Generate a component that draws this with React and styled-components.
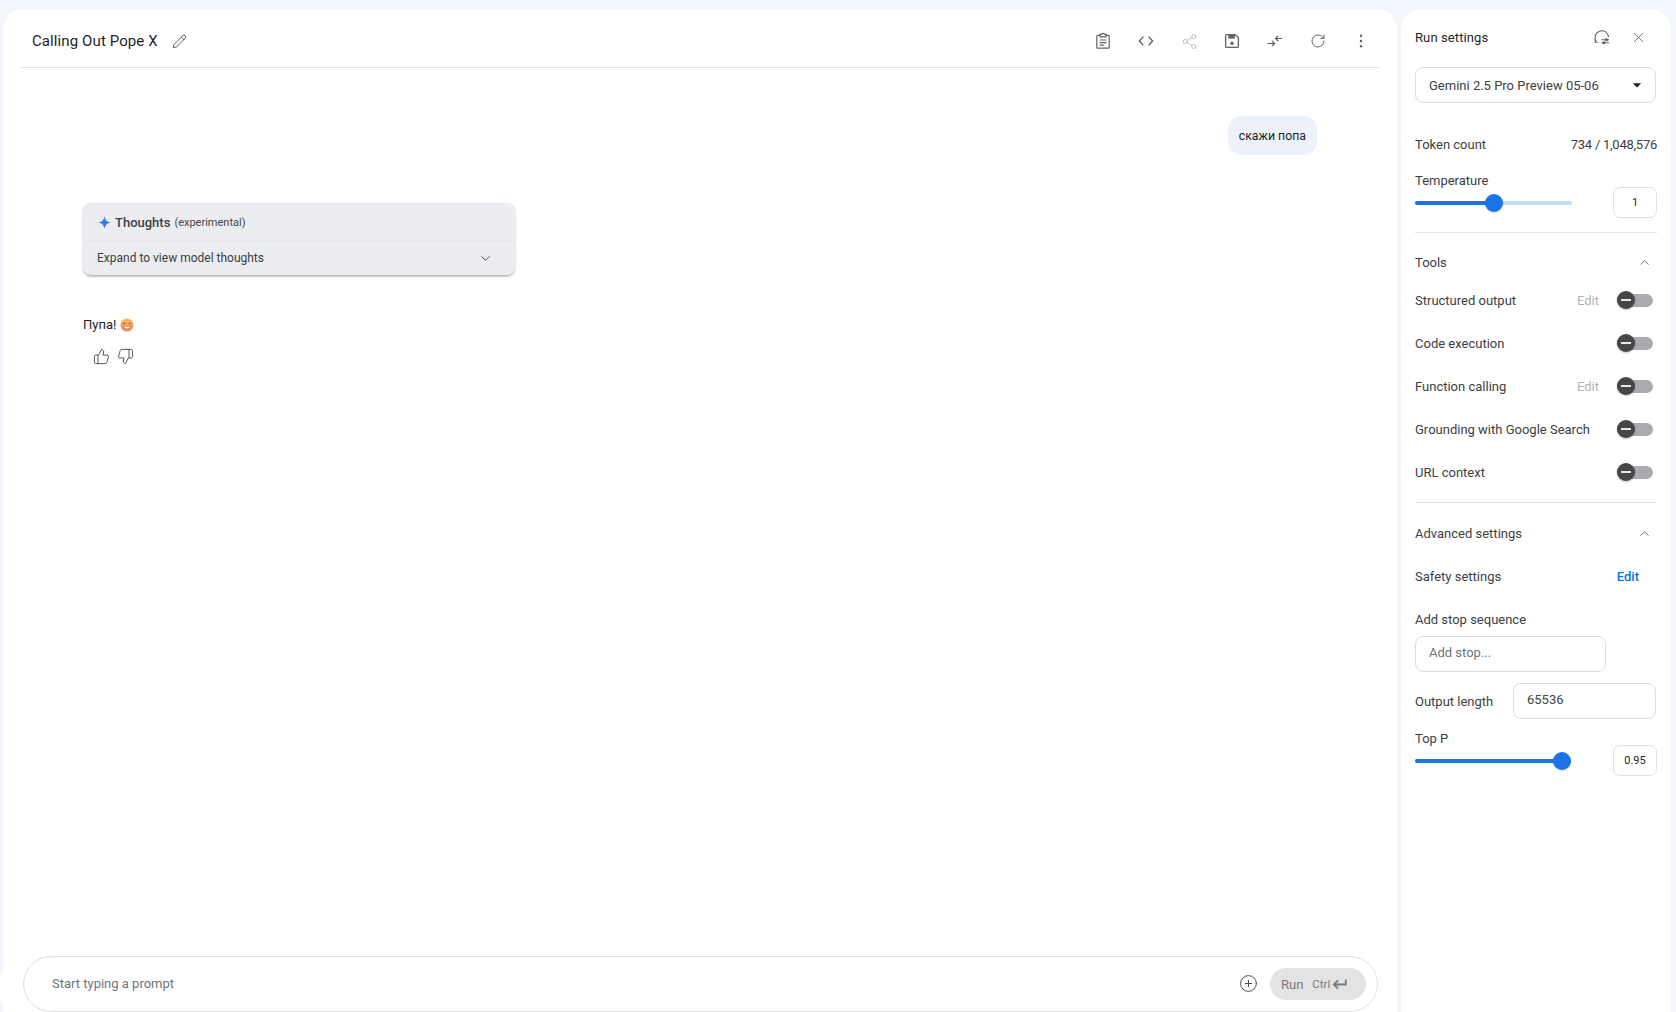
import React from 'react';
import styled, { createGlobalStyle } from 'styled-components';
import { MdArrowDropDown } from 'react-icons/md';
import {
  Pencil, Share2, RotateCw, ChevronDown, ChevronUp, X,
  ThumbsUp, ThumbsDown, CirclePlus,
} from 'lucide-react';

const GlobalStyle = createGlobalStyle`
  html, body { margin: 0; padding: 0; background: #f3f6fc; }
  body { font-family: Roboto, "Liberation Sans", sans-serif; color: #1f1f1f; font-size: 13px; }
  * { box-sizing: border-box; }
`;

const Page = styled.div`
  position: relative;
  display: flex;
  gap: 4px;
  height: 1012px;
  padding: 9px 5px 0 3px;
  overflow: hidden;
  background: #f3f6fc;
  &::before {
    content: '';
    position: absolute;
    left: 0;
    top: 973px;
    width: 3px;
    height: 30px;
    background: #fff;
  }
`;

const Main = styled.main`
  width: 1394px;
  display: flex;
  flex-direction: column;
  background: #fff;
  border-radius: 20px 20px 0 0;
`;

const Header = styled.header`
  height: 59px;
  margin: 0 18px 0 18px;
  padding: 6px 6px 0 11px;
  display: flex;
  align-items: center;
  border-bottom: 1px solid #e1e3e5;
`;

const Title = styled.h1`
  margin: 0 13px 0 0;
  font-size: 15px;
  font-weight: 400;
  letter-spacing: 0.1px;
  color: #1f1f1f;
`;

const Toolbar = styled.div`
  margin-left: auto;
  display: flex;
  gap: 19px;
`;

const IconSlot = styled.span`
  width: ${p => p.$size || 24}px;
  height: ${p => p.$size || 24}px;
  margin-right: ${p => p.$right || 0}px;
  display: inline-flex;
  align-items: center;
  justify-content: center;
  flex: none;
  color: ${p => p.$color || '#5f6368'};
`;

const Chat = styled.section`
  flex: 1;
  display: flex;
  flex-direction: column;
  padding: 48px 80px 0 80px;
`;

const UserBubble = styled.div`
  align-self: flex-end;
  height: 39px;
  padding: 0 11px;
  display: flex;
  align-items: center;
  border-radius: 14px;
  background: #edf2fa;
  font-size: 12.3px;
  color: #1f1f1f;
`;

const ThoughtsCard = styled.div`
  width: 432px;
  margin-top: 48px;
  border-radius: 8px;
  background: #ecedf1;
  box-shadow: 0 2px 3px -1px rgba(60, 64, 67, 0.55), 0 0 2px rgba(60, 64, 67, 0.08);
`;

const ThoughtsHead = styled.div`
  height: 38px;
  padding: 2px 15px 0 15px;
  display: flex;
  align-items: center;
  gap: 4px;
  border-bottom: 1px solid #e6e7ea;
  font-size: 13px;
  font-weight: 500;
  color: #3c4043;
`;

const Muted = styled.span`
  font-size: 11px;
  font-weight: 400;
  color: #444746;
`;

const ThoughtsRow = styled.div`
  height: 34px;
  padding: 0 22px 0 14px;
  display: flex;
  align-items: center;
  justify-content: space-between;
  font-size: 12px;
  color: #3c4043;
`;

const Answer = styled.p`
  margin: 40px 0 0;
  line-height: 20px;
  display: flex;
  align-items: center;
  gap: 4px;
  font-size: 13px;
  color: #1f1f1f;
`;

const Feedback = styled.div`
  margin: 12px 0 0 9px;
  display: flex;
  gap: 6px;
`;

const PromptBox = styled.div`
  height: 56px;
  margin: 0 19px 0 20px;
  padding: 0 11px 2px 28px;
  display: flex;
  align-items: center;
  border: 1px solid #e0e1e3;
  border-radius: 28px;
  background: #fff;
`;

const Placeholder = styled.span`
  flex: 1;
  font-size: 13px;
  color: #6f7377;
`;

const RunButton = styled.div`
  width: 96px;
  height: 32px;
  margin: 2px 0 0 12px;
  padding: 0 0 0 11px;
  display: flex;
  align-items: center;
  border-radius: 16px;
  background: #e3e3e5;
  color: #77797c;
  font-size: 13px;
`;

const RunHint = styled.span`
  margin: 0 2px 0 9px;
  font-size: 11.5px;
`;

const Sidebar = styled.aside`
  width: 270px;
  padding: 18px 14px 0;
  background: #fff;
  border-radius: 20px 20px 0 0;
`;

const RowBetween = styled.div`
  height: 20px;
  margin-top: ${p => p.$top || 0}px;
  display: flex;
  align-items: center;
  justify-content: space-between;
  font-size: 13px;
  color: #3c4043;
`;

const SideTitle = styled.h2`
  margin: 0;
  font-size: 13px;
  font-weight: 400;
  letter-spacing: 0.1px;
  color: #1f1f1f;
`;

const HeadIcons = styled.div`
  display: flex;
  gap: 16px;
  margin-right: 9px;
`;

const Select = styled.div`
  height: 36px;
  margin: 20px 1px 0 0;
  padding: 0 8px 0 13px;
  display: flex;
  align-items: center;
  justify-content: space-between;
  border: 1px solid #dcdee0;
  border-radius: 8px;
  font-size: 13px;
  color: #3c4043;
`;

const TokenValue = styled.span`
  letter-spacing: -0.25px;
`;

const SliderBlock = styled.div`
  margin-top: ${p => p.$top}px;
  display: flex;
  align-items: flex-end;
  justify-content: space-between;
`;

const SliderCol = styled.div`
  width: 157px;
  padding-bottom: 3px;
`;

const Label = styled.div`
  height: 20px;
  margin-top: ${p => p.$top || 0}px;
  line-height: 20px;
  font-size: 13px;
  color: #3c4043;
`;

const SliderWrap = styled.div`
  height: 24px;
  display: flex;
  align-items: center;
`;

const Track = styled.div`
  position: relative;
  width: ${p => p.$width}px;
  height: 4px;
  border-radius: 2px;
  background: #c2dcfb;
`;

const TrackFill = styled.div`
  height: 100%;
  border-radius: 2px;
  background: #1a73e8;
`;

const Thumb = styled.div`
  position: absolute;
  top: -7px;
  width: 18px;
  height: 18px;
  margin-left: -9px;
  border-radius: 50%;
  background: #1a73e8;
  box-shadow: 0 1px 2px rgba(0, 0, 0, 0.15);
`;

const NumberBox = styled.div`
  width: 44px;
  height: 31px;
  display: flex;
  align-items: center;
  justify-content: center;
  border: 1px solid #e0e1e3;
  border-radius: 7px;
  font-size: 11px;
  color: #1f1f1f;
`;

const Divider = styled.hr`
  margin: ${p => p.$top}px 0 0;
  border: 0;
  border-top: 1px solid #e1e3e5;
`;

const ToolList = styled.div`
  margin-top: 7px;
`;

const ToolRow = styled.div`
  height: 43px;
  margin-top: ${p => p.$top || 0}px;
  display: flex;
  align-items: center;
  font-size: 13px;
  color: #3c4043;
`;

const ToolName = styled.span`
  flex: 1;
`;

const DisabledEdit = styled.span`
  margin-right: 18px;
  color: #b1b3b6;
`;

const Toggle = styled.span`
  position: relative;
  width: 36px;
  height: 13px;
  margin: -1px 4px 0 0;
  border-radius: 7px;
  background: #a9abae;
`;

const ToggleKnob = styled.span`
  position: absolute;
  left: 0;
  top: -3px;
  width: 18px;
  height: 18px;
  border-radius: 50%;
  background: #444746;
  box-shadow: 0 1px 2px rgba(0, 0, 0, 0.25);
  &::after {
    content: '';
    position: absolute;
    left: 4px;
    top: 8px;
    width: 10px;
    height: 2px;
    background: #e8e8e8;
  }
`;

const EditLink = styled.span`
  margin-right: 18px;
  font-weight: 500;
  color: #0b74e5;
`;

const TextField = styled.div`
  width: ${p => p.$width}px;
  height: 36px;
  margin-top: ${p => p.$top || 0}px;
  padding: 0 0 3px 13px;
  display: flex;
  align-items: center;
  border: 1px solid #dcdee0;
  border-radius: 8px;
  font-size: 13px;
  color: ${p => p.$color || '#6f7377'};
`;

const OutputRow = styled.div`
  margin: 11px 1px 0 0;
  padding-bottom: 0;
  display: flex;
  align-items: center;
  justify-content: space-between;
  font-size: 13px;
  color: #3c4043;
`;

const ClipboardIcon = () => (
  <svg width="18" height="18" viewBox="0 0 18 18" fill="none" stroke="currentColor" strokeWidth="1.2">
    <path d="M6 3.4H3.6a.8.8 0 0 0-.8.8v11.2c0 .4.4.8.8.8h10.8c.4 0 .8-.4.8-.8V4.2a.8.8 0 0 0-.8-.8H12" />
    <path d="M6 2.4h1.6a1.5 1.5 0 0 1 2.8 0H12v2.4H6Z" fill="#fff" />
    <path d="M5.6 8h6.8M5.6 10.6h6.8M5.6 13.2h4.4" />
  </svg>
);

const SaveIcon = () => (
  <svg width="18" height="18" viewBox="0 0 18 18" fill="none" stroke="currentColor" strokeWidth="1.3">
    <path d="M3.6 2.6h8.6l3.2 3.2v8.6c0 .6-.4 1-1 1H3.6c-.6 0-1-.4-1-1V3.6c0-.6.4-1 1-1Z" />
    <rect x="5.4" y="3" width="6.4" height="3.6" fill="currentColor" stroke="none" />
    <circle cx="9" cy="11.2" r="1.7" fill="currentColor" stroke="none" />
  </svg>
);

const ConvertIcon = () => (
  <svg width="18" height="18" viewBox="0 0 18 18" fill="none" stroke="currentColor" strokeWidth="1.2">
    <path d="M1.5 11.5h7M6 9l2.6 2.5L6 14M16 6.5H9.8M12.2 4 9.6 6.5 12.2 9" />
  </svg>
);

const DotsIcon = () => (
  <svg width="18" height="18" viewBox="0 0 18 18" fill="currentColor">
    <circle cx="9" cy="3.8" r="1.2" />
    <circle cx="9" cy="9" r="1.2" />
    <circle cx="9" cy="14.2" r="1.2" />
  </svg>
);

const CodeIcon = () => (
  <svg width="18" height="18" viewBox="0 0 18 18" fill="none" stroke="currentColor" strokeWidth="1.4">
    <path d="M6.4 4.6 2.4 9l4 4.4M11.6 4.6l4 4.4-4 4.4" />
  </svg>
);

const TuneIcon = () => (
  <svg width="20" height="20" viewBox="0 0 20 20" fill="none" stroke="currentColor" strokeWidth="1.1">
    <path d="M4.2 14.4A6.8 6.8 0 1 1 16.6 10" />
    <path d="M3.2 12.2v3h3" />
    <path d="M9.5 12.8h7.5M9.5 15.8h7.5" />
    <circle cx="14.4" cy="12.8" r="1" fill="currentColor" />
    <circle cx="11.8" cy="15.8" r="1" fill="currentColor" />
  </svg>
);

const ReturnIcon = () => (
  <svg width="15" height="14" viewBox="0 0 15 14" fill="none" stroke="currentColor" strokeWidth="1.8">
    <path d="M13.8 2.5v5H2.2M6 3.4 1.8 7.5 6 11.6" />
  </svg>
);

const Sparkle = () => (
  <svg width="13" height="13" viewBox="0 0 12 12">
    <defs>
      <linearGradient id="spark" x1="0" y1="0" x2="1" y2="1">
        <stop offset="0" stopColor="#4a8ff0" />
        <stop offset="1" stopColor="#1f6fe8" />
      </linearGradient>
    </defs>
    <path d="M6 0C6.5 3.4 8.2 5.4 12 6 8.2 6.6 6.5 8.6 6 12 5.5 8.6 3.8 6.6 0 6 3.8 5.4 5.5 3.4 6 0Z" fill="url(#spark)" />
  </svg>
);

const Smile = () => (
  <svg width="14" height="14" viewBox="0 0 14 14">
    <defs>
      <linearGradient id="smile" x1="0" y1="0" x2="0" y2="1">
        <stop offset="0" stopColor="#f8bb62" />
        <stop offset="1" stopColor="#f3866a" />
      </linearGradient>
    </defs>
    <circle cx="7" cy="7" r="6.6" fill="url(#smile)" />
    <path d="M3 5.9c.5-1 1.8-1 2.3 0M8.7 5.9c.5-1 1.8-1 2.3 0" stroke="#7c4a26" strokeWidth=".9" fill="none" />
    <path d="M3.6 8.2h6.8c-.3 1.8-1.8 2.8-3.4 2.8S3.9 10 3.6 8.2Z" fill="#fff3e0" stroke="#8a4f2a" strokeWidth=".5" />
  </svg>
);

const Slider = ({ label, width, percent, value, top }) => (
  <SliderBlock $top={top}>
    <SliderCol>
      <Label>{label}</Label>
      <SliderWrap>
        <Track $width={width}>
          <TrackFill style={{ width: `${percent}%` }} />
          <Thumb style={{ left: `${percent}%` }} />
        </Track>
      </SliderWrap>
    </SliderCol>
    <NumberBox>{value}</NumberBox>
  </SliderBlock>
);

const tools = [
  { name: 'Structured output', edit: true },
  { name: 'Code execution' },
  { name: 'Function calling', edit: true },
  { name: 'Grounding with Google Search' },
  { name: 'URL context' },
];

export default function App() {
  return (
    <Page>
      <GlobalStyle />
      <Main>
        <Header>
          <Title>Calling Out Pope X</Title>
          <IconSlot $size={18} $color="#444746"><Pencil size={15} strokeWidth={1.4} /></IconSlot>
          <Toolbar>
            <IconSlot><ClipboardIcon /></IconSlot>
            <IconSlot><CodeIcon /></IconSlot>
            <IconSlot $color="#b4b6b9"><Share2 size={17} strokeWidth={1.1} /></IconSlot>
            <IconSlot><SaveIcon /></IconSlot>
            <IconSlot><ConvertIcon /></IconSlot>
            <IconSlot><RotateCw size={16} strokeWidth={1.5} /></IconSlot>
            <IconSlot><DotsIcon /></IconSlot>
          </Toolbar>
        </Header>
        <Chat>
          <UserBubble>скажи попа</UserBubble>
          <ThoughtsCard>
            <ThoughtsHead>
              <Sparkle />
              Thoughts <Muted>(experimental)</Muted>
            </ThoughtsHead>
            <ThoughtsRow>
              Expand to view model thoughts
              <IconSlot $size={16} $color="#3c4043"><ChevronDown size={15} strokeWidth={1.5} /></IconSlot>
            </ThoughtsRow>
          </ThoughtsCard>
          <Answer>Пупа! <Smile /></Answer>
          <Feedback>
            <IconSlot $size={18} $color="#3c4043"><ThumbsUp size={17} strokeWidth={1.2} /></IconSlot>
            <IconSlot $size={18} $color="#3c4043"><ThumbsDown size={17} strokeWidth={1.2} /></IconSlot>
          </Feedback>
        </Chat>
        <PromptBox>
          <Placeholder>Start typing a prompt</Placeholder>
          <IconSlot $size={20} $color="#444746"><CirclePlus size={19} strokeWidth={1.2} /></IconSlot>
          <RunButton>
            Run
            <RunHint>Ctrl</RunHint>
            <ReturnIcon />
          </RunButton>
        </PromptBox>
      </Main>
      <Sidebar>
        <RowBetween>
          <SideTitle>Run settings</SideTitle>
          <HeadIcons>
            <IconSlot $size={20}><TuneIcon /></IconSlot>
            <IconSlot $size={20}><X size={17} strokeWidth={1.2} /></IconSlot>
          </HeadIcons>
        </RowBetween>
        <Select>
          Gemini 2.5 Pro Preview 05-06
          <IconSlot $size={20} $color="#1f1f1f"><MdArrowDropDown size={22} /></IconSlot>
        </Select>
        <RowBetween $top={31}>
          Token count
          <TokenValue>734 / 1,048,576</TokenValue>
        </RowBetween>
        <Slider label="Temperature" width={157} percent={50} value="1" top={17} />
        <Divider $top={14} />
        <RowBetween $top={19}>
          Tools
          <IconSlot $size={16} $right={5}><ChevronUp size={15} strokeWidth={1.4} /></IconSlot>
        </RowBetween>
        <ToolList>
          {tools.map(t => (
            <ToolRow key={t.name}>
              <ToolName>{t.name}</ToolName>
              {t.edit && <DisabledEdit>Edit</DisabledEdit>}
              <Toggle><ToggleKnob /></Toggle>
            </ToolRow>
          ))}
        </ToolList>
        <Divider $top={8} />
        <RowBetween $top={20}>
          Advanced settings
          <IconSlot $size={16} $right={5}><ChevronUp size={15} strokeWidth={1.4} /></IconSlot>
        </RowBetween>
        <ToolRow $top={12}>
          <ToolName>Safety settings</ToolName>
          <EditLink>Edit</EditLink>
        </ToolRow>
        <Label $top={12}>Add stop sequence</Label>
        <TextField $width={191} $top={6}>Add stop...</TextField>
        <OutputRow>
          Output length
          <TextField $width={143} $color="#444746">65536</TextField>
        </OutputRow>
        <Slider label="Top P" width={147} percent={100} value="0.95" top={10} />
      </Sidebar>
    </Page>
  );
}
